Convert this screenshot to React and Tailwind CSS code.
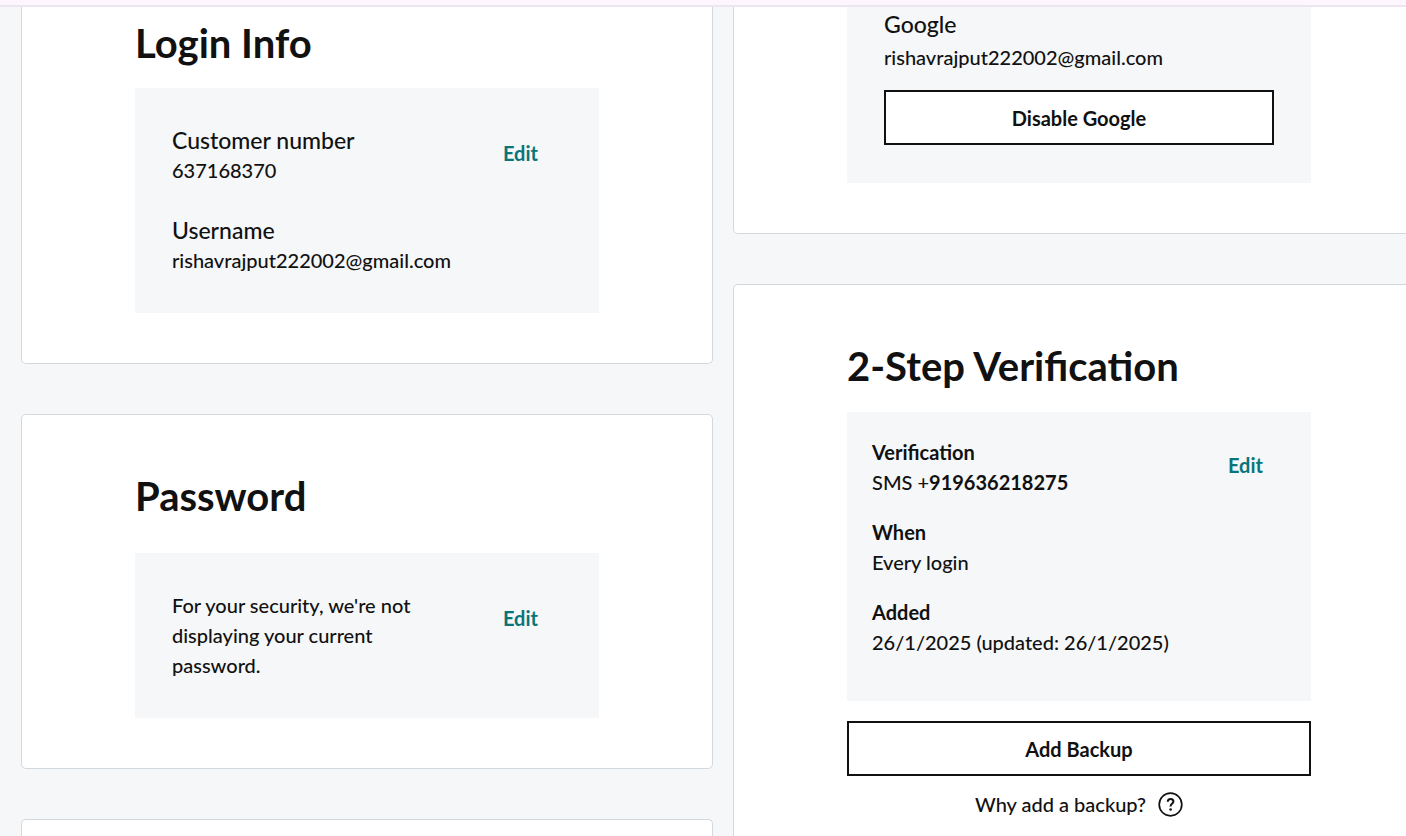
function Card({ title, titleGap = "mb-[21px]", className = "", children }) {
  return (
    <section className={`border-[#d2d9de] bg-white px-[113px] ${className}`}>
      {title && (
        <h2 className={`text-[40px] leading-[46px] font-bold whitespace-nowrap ${titleGap}`}>{title}</h2>
      )}
      {children}
    </section>
  );
}

function EditLink({ label }) {
  return (
    <a href="#edit" aria-label={label} className="mt-[13px] shrink-0 font-bold text-[#09757a]">
      Edit
    </a>
  );
}

function Field({ label, children }) {
  return (
    <div>
      <dt className="text-[23px]">{label}</dt>
      <dd>{children}</dd>
    </div>
  );
}

function BoldField({ label, children }) {
  return (
    <div>
      <dt className="font-bold">{label}</dt>
      <dd>{children}</dd>
    </div>
  );
}

function OutlineButton({ children, className = "" }) {
  return (
    <button
      type="button"
      className={`h-[55px] w-full border-2 border-[#111] bg-white font-bold ${className}`}
    >
      {children}
    </button>
  );
}

function HelpIcon() {
  return (
    <svg viewBox="0 0 25 25" className="size-[25px]" fill="none" stroke="currentColor" strokeWidth="1.7" aria-hidden="true">
      <circle cx="12.5" cy="12.5" r="11.3" />
      <path strokeWidth="2" d="M9.7 9.8c.1-1.7 1.2-2.7 2.9-2.7s2.8 1 2.8 2.5c0 2.1-2.8 2.2-2.8 4.4v.5" />
      <circle cx="12.6" cy="17.5" r="1.3" fill="currentColor" stroke="none" />
    </svg>
  );
}

export default function App() {
  return (
    <div className="flex h-screen flex-col overflow-hidden bg-[#f5f7f8] font-['Lato','Open_Sans',sans-serif] text-[20px] leading-[30px] font-medium text-[#111]">
      <header className="h-[7px] shrink-0 border-b-2 border-[#ede5ef] bg-[#fdf6ff]" />
      <main className="-mr-[19px] ml-[21px] grid min-h-0 flex-1 grid-cols-2 gap-5">
        <div className="flex flex-col gap-[50px]">
          <Card title="Login Info" className="rounded-b-[5px] border-x border-b pt-[13px] pb-[50px]">
            <div className="mt-[22px] flex items-start justify-between gap-10 bg-[#f5f7f8] pt-[37px] pr-[61px] pb-[38px] pl-[37px]">
              <dl className="flex flex-col gap-[30px]">
                <Field label="Customer number">637168370</Field>
                <Field label="Username">rishavrajput222002@gmail.com</Field>
              </dl>
              <EditLink label="Edit login info" />
            </div>
          </Card>
          <Card title="Password" titleGap="mb-[34px]" className="rounded-[5px] border pt-[58px] pb-[50px]">
            <div className="flex items-start justify-between gap-10 bg-[#f5f7f8] pt-[37px] pr-[61px] pb-[38px] pl-[37px]">
              <p>For your security, we're not displaying your current password.</p>
              <EditLink label="Edit password" />
            </div>
          </Card>
          <Card className="flex-1 rounded-t-[5px] border-x border-t" />
        </div>
        <div className="flex flex-col gap-[50px]">
          <Card className="rounded-b-[5px] border-x border-b pb-[50px]">
            <div className="bg-[#f5f7f8] px-[37px] pt-[2px] pb-[38px]">
              <h3 className="text-[23px]">Google</h3>
              <p className="mt-[3px]">rishavrajput222002@gmail.com</p>
              <OutlineButton className="mt-[18px]">Disable Google</OutlineButton>
            </div>
          </Card>
          <Card title="2-Step Verification" titleGap="mb-[23px]" className="flex-1 rounded-t-[5px] border-x border-t pt-[58px]">
            <div className="flex items-start justify-between bg-[#f5f7f8] pt-[25px] pr-[48px] pb-[44px] pl-[25px]">
              <dl className="flex flex-col gap-5">
                <BoldField label="Verification">
                  SMS +<b className="font-bold">919636218275</b>
                </BoldField>
                <BoldField label="When">Every login</BoldField>
                <BoldField label="Added">26/1/2025 (updated: 26/1/2025)</BoldField>
              </dl>
              <EditLink label="Edit 2-step verification" />
            </div>
            <OutlineButton className="mt-5">Add Backup</OutlineButton>
            <div className="mt-[13px] flex items-center justify-center gap-3">
              <span>Why add a backup?</span>
              <button type="button" aria-label="Why add a backup?">
                <HelpIcon />
              </button>
            </div>
          </Card>
        </div>
      </main>
    </div>
  );
}
